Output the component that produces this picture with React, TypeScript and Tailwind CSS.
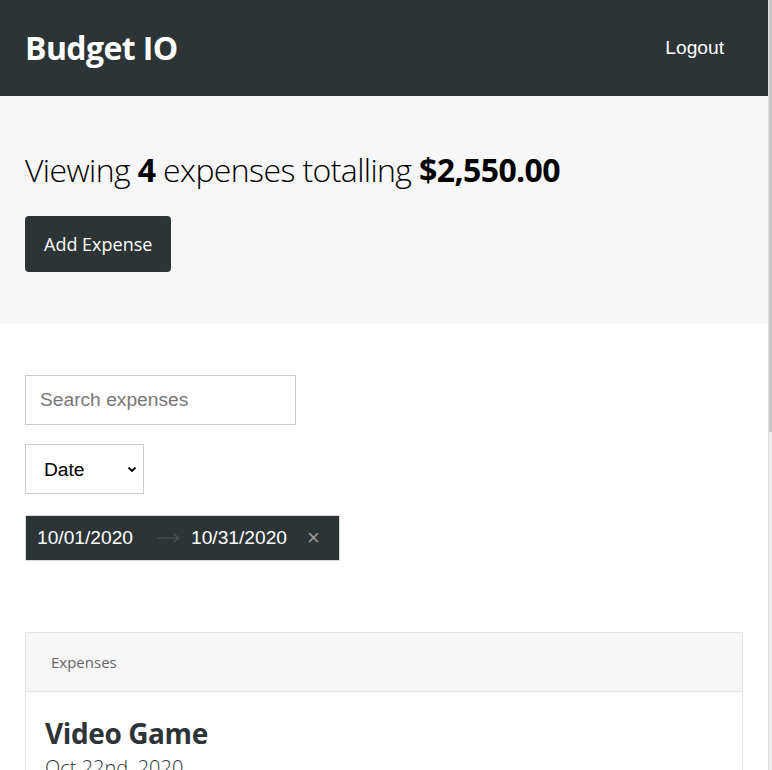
import React from "react";

const seg = { fontFamily: '"Open Sans", "Noto Sans", sans-serif' };
const arial = { fontFamily: '"Liberation Sans", Arial, sans-serif' };

const expenses = [
  { d: "Video Game", date: "Oct 22nd, 2020", amt: "$60.00" },
  { d: "Rent", date: "Oct 1st, 2020", amt: "$1,950.00" },
  { d: "Gas Bill", date: "Oct 12th, 2020", amt: "$140.00" },
  { d: "Groceries", date: "Oct 15th, 2020", amt: "$400.00" },
];

export default function App() {
  return (
    <div className="relative w-[772px] h-[770px] overflow-hidden bg-white">
      <div className="w-[768px] text-[#2d3436]" style={seg}>
        <header className="bg-[#2d3436] h-[96px] flex items-center justify-between px-[25px]">
          <h1 className="text-white font-bold text-[32px] leading-none tracking-[-0.6px]">Budget IO</h1>
          <button className="text-white text-[19.2px] pr-[19px]" style={arial}>Logout</button>
        </header>
        <section className="bg-[#f7f7f7] px-[25px] pt-[54px] pb-[52px]">
          <h2 className="text-[32px] font-light text-black leading-[40px] tracking-[-0.6px]">
            Viewing <span className="font-bold">4</span> expenses totalling <span className="font-bold">$2,550.00</span>
          </h2>
          <button className="mt-[26px] bg-[#2d3436] text-white text-[18px] h-[56px] px-[19px] rounded-[4px]">
            Add Expense
          </button>
        </section>
        <section className="px-[25px] pt-[51px]">
          <input
            className="block w-[271px] h-[50px] border border-[#cacccd] px-[14px] text-[19.2px] placeholder:text-[#777] outline-none"
            placeholder="Search expenses"
            style={arial}
          />
          <div className="mt-[19px] w-[119px] h-[50px] border border-[#cacccd] flex items-center justify-between pl-[18px] pr-[6px] text-[19.2px] text-black" style={arial}>
            <span className="pt-[3px]">Date</span>
            <svg width="10" height="7" viewBox="0 0 10 7"><path d="M1.5 1.5 L5 5 L8.5 1.5" fill="none" stroke="#000" strokeWidth="1.8" /></svg>
          </div>
          <div className="mt-[21px] w-[315px] h-[46px] bg-[#2d3436] flex items-center text-white text-[19.2px] pl-[11px] border border-[#dbdbdb]" style={arial}>
            <span className="w-[120px]">10/01/2020</span>
            <span className="w-[34px] flex justify-start">
              <svg width="24" height="10" viewBox="0 0 24 10"><path d="M0 5 H22 M17 1 L22 5 L17 9" fill="none" stroke="#4b5558" strokeWidth="1.2" /></svg>
            </span>
            <span className="w-[116px]">10/31/2020</span>
            <span className="text-[#9a9a9a] text-[22px] leading-none">×</span>
          </div>
          <div className="mt-[71px] mb-[40px] border border-[#e5e5e5]">
            <div className="bg-[#f7f7f7] h-[59px] flex items-center px-[25px] text-[15px] text-[#666] border-b border-[#e5e5e5]">
              Expenses
            </div>
            {expenses.map((e) => (
              <div key={e.d} className="px-[19px] pt-[23px] pb-[22px] border-b border-[#e5e5e5]">
                <h3 className="text-[28px] font-bold leading-[36px] text-[#2d3436] tracking-[-0.4px]">{e.d}</h3>
                <span className="mt-[4px] text-[20px] font-light leading-[26px] block">{e.date}</span>
                <h3 className="text-[28px] font-bold">{e.amt}</h3>
              </div>
            ))}
          </div>
        </section>
      </div>
      <div className="absolute right-0 top-0 w-[4px] h-[770px] bg-[#ececec] border-l border-[#dcdcdc]">
        <div className="h-[432px] bg-[#c8c8c8]" />
      </div>
    </div>
  );
}
